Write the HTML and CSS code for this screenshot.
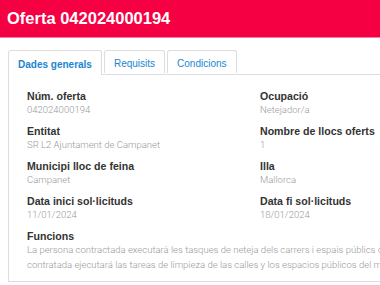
FILE: index.html
```html
<!DOCTYPE html>
<html lang="ca">
<head>
<meta charset="utf-8">
<title>Oferta 042024000194</title>
<link rel="stylesheet" href="styles.css">
</head>
<body>
<header class="topbar">
  <h1 class="title">Oferta 042024000194</h1>
</header>
<main class="content">
  <nav class="tabs">
    <a class="tab tab-active">Dades generals</a>
    <a class="tab">Requisits</a>
    <a class="tab">Condicions</a>
  </nav>
  <section class="panel">
    <div class="grid">
      <div class="field">
        <div class="label">Núm. oferta</div>
        <div class="value">042024000194</div>
      </div>
      <div class="field">
        <div class="label">Ocupació</div>
        <div class="value">Netejador/a</div>
      </div>
      <div class="field">
        <div class="label">Entitat</div>
        <div class="value">SR L2 Ajuntament de Campanet</div>
      </div>
      <div class="field">
        <div class="label">Nombre de llocs oferts</div>
        <div class="value">1</div>
      </div>
      <div class="field">
        <div class="label">Municipi lloc de feina</div>
        <div class="value">Campanet</div>
      </div>
      <div class="field">
        <div class="label">Illa</div>
        <div class="value">Mallorca</div>
      </div>
      <div class="field">
        <div class="label">Data inici sol·licituds</div>
        <div class="value">11/01/2024</div>
      </div>
      <div class="field">
        <div class="label">Data fi sol·licituds</div>
        <div class="value">18/01/2024</div>
      </div>
      <div class="field field-wide">
        <div class="label">Funcions</div>
        <div class="value value-text"><span class="line">La persona contractada executarà les tasques de neteja dels carrers i espais públics del municipi. La persona</span><span class="line">contratada ejecutará las tareas de limpieza de las calles y los espacios públicos del municipio.</span></div>
      </div>
    </div>
  </section>
</main>
</body>
</html>
```
FILE: styles.css
```css
html, body {
  margin: 0;
  padding: 0;
  overflow: hidden;
  background: #ffffff;
}
body {
  font-family: "Liberation Sans", Arial, sans-serif;
  color: #333333;
}
.topbar {
  background: #f50042;
  height: 37px;
  border-bottom: 1px solid #f7809c;
  display: flex;
  align-items: center;
  padding-left: 7px;
}
.title {
  margin: 0;
  color: #ffffff;
  font-size: 16.5px;
  font-weight: bold;
  line-height: 1;
}
.content {
  padding: 12px 0 0 8px;
}
.tabs {
  display: flex;
  gap: 2px;
  width: 520px;
  border-bottom: 1px solid #dddddd;
  height: 24px;
}
.tab {
  display: flex;
  align-items: center;
  justify-content: center;
  height: 23px;
  padding: 2px 9px 0;
  box-sizing: border-box;
  border: 1px solid #dddddd;
  border-bottom: none;
  border-radius: 3px 3px 0 0;
  font-size: 10px;
  color: #1a86d0;
  background: #ffffff;
}
.tab-active {
  font-weight: bold;
  height: 25px;
  padding: 2px 9px 0;
}
.panel {
  width: 520px;
  border: 1px solid #dddddd;
  border-top: none;
  padding: 15px 0 17px 18px;
  box-sizing: border-box;
  height: 207px;
}
.grid {
  display: grid;
  grid-template-columns: 233px 233px;
  row-gap: 9px;
}
.field-wide {
  grid-column: 1 / -1;
}
.label {
  font-size: 10.6px;
  font-weight: bold;
  color: #333333;
  line-height: 13px;
}
.value {
  font-family: Roboto, "Liberation Sans", sans-serif;
  font-weight: 300;
  font-size: 9.5px;
  color: #999999;
  line-height: 12px;
  margin-top: 1px;
}
.value-text {
  margin-top: -1px;
}
.value-text .line {
  display: block;
  white-space: nowrap;
  line-height: 15px;
}
```
